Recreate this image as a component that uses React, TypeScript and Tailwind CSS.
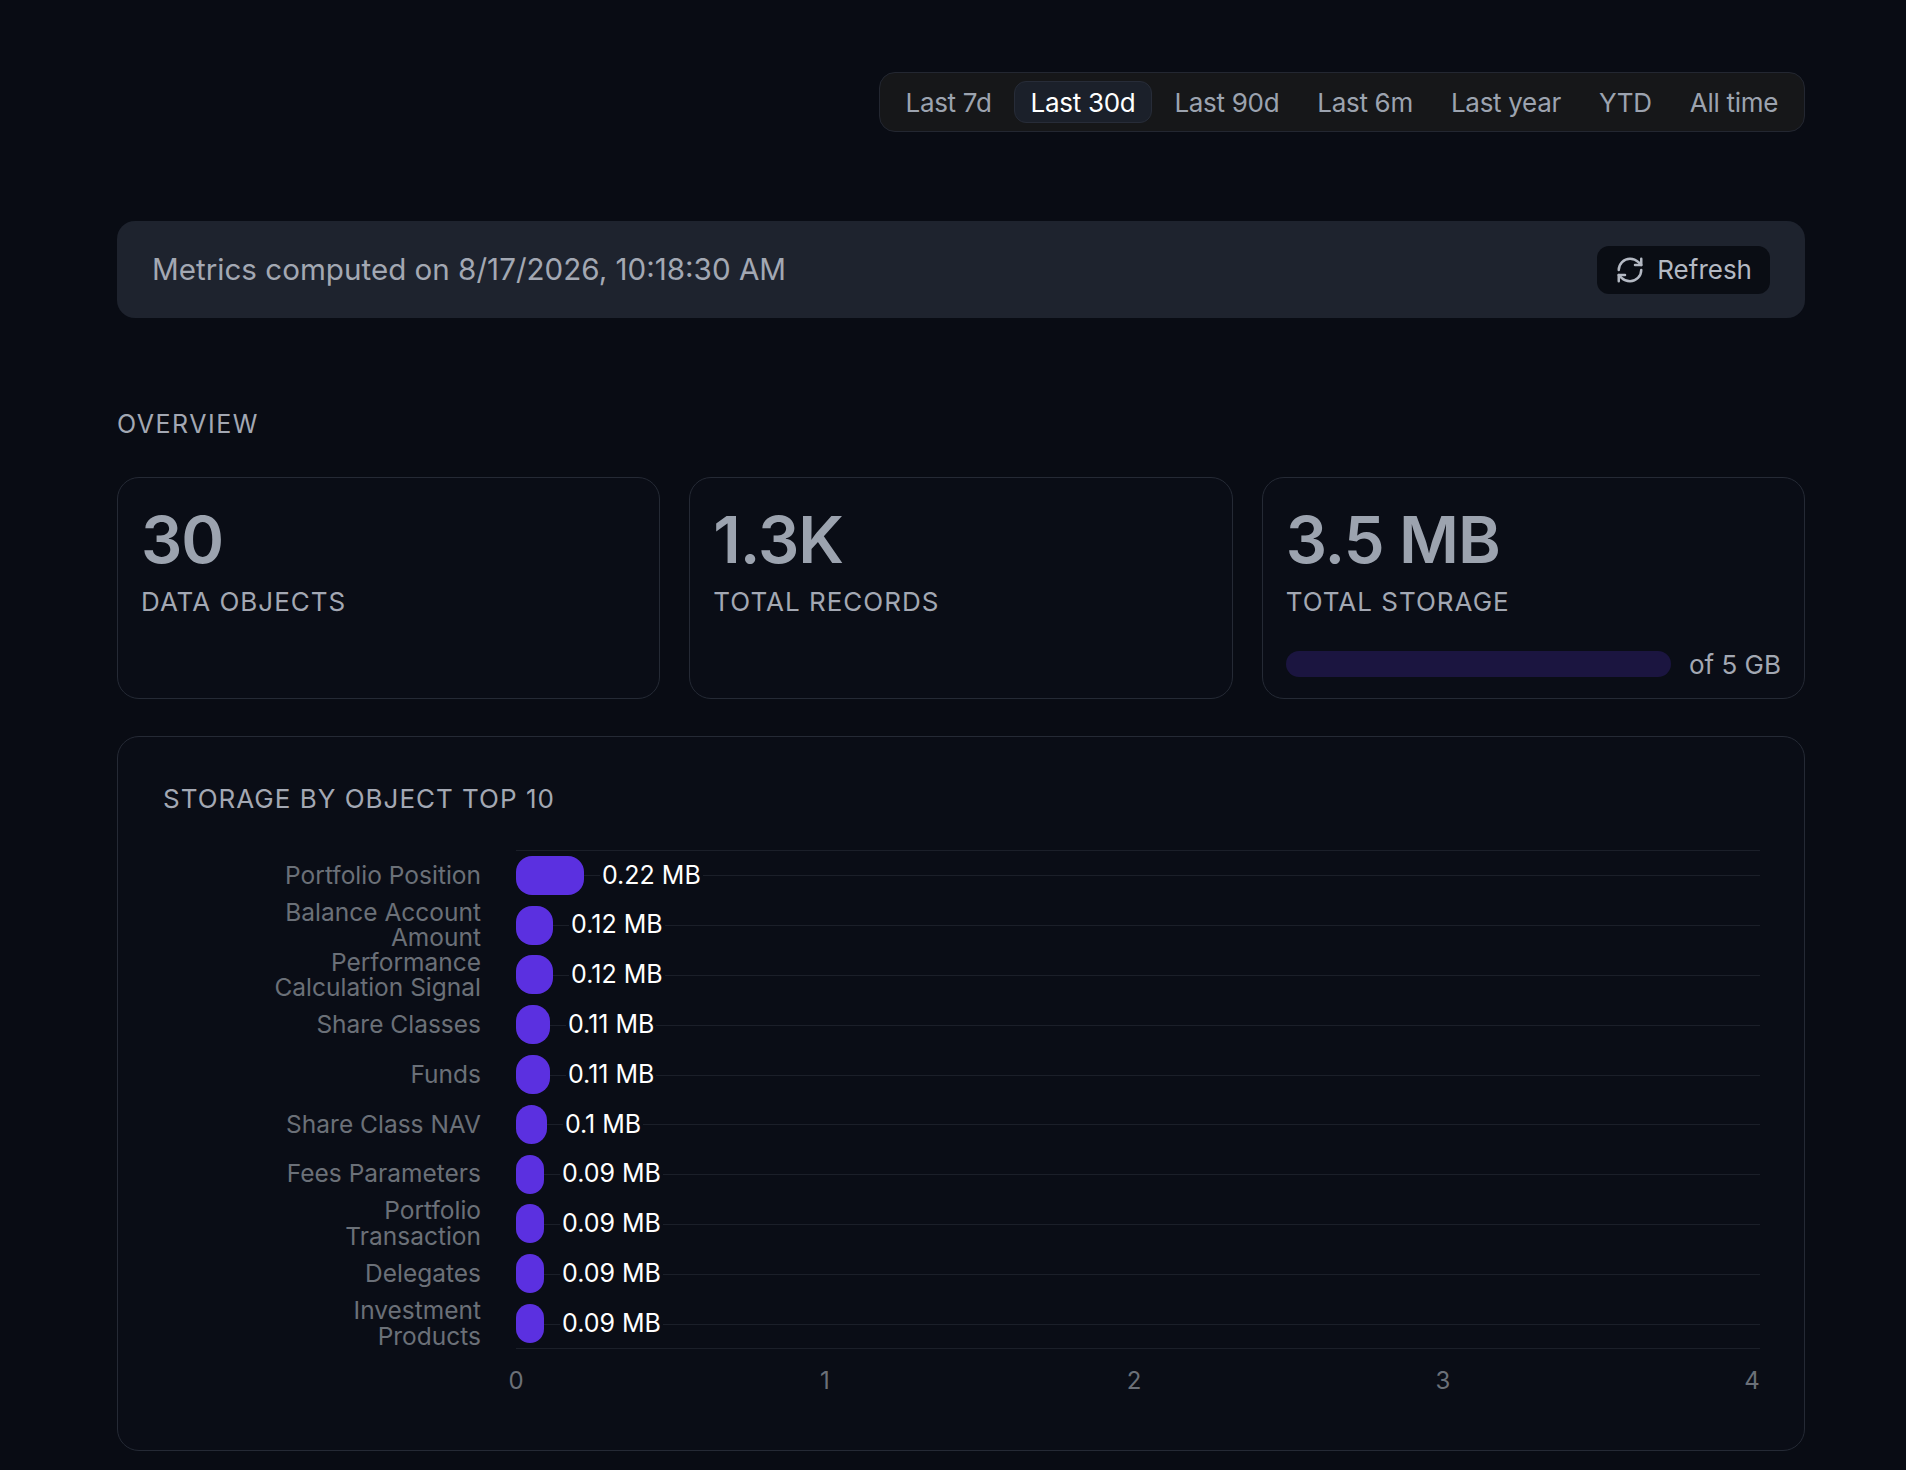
import React from "react";

const tabs = ["Last 7d", "Last 30d", "Last 90d", "Last 6m", "Last year", "YTD", "All time"];
const rows: [string[], number][] = [
  [["Portfolio Position"], 0.22],
  [["Balance Account", "Amount"], 0.12],
  [["Performance", "Calculation Signal"], 0.12],
  [["Share Classes"], 0.11],
  [["Funds"], 0.11],
  [["Share Class NAV"], 0.1],
  [["Fees Parameters"], 0.09],
  [["Portfolio", "Transaction"], 0.09],
  [["Delegates"], 0.09],
  [["Investment", "Products"], 0.09],
];
const PX = 309;

export default function App() {
  return (
    <div className="min-h-[1470px] w-full bg-[#090c14] text-[#9ca3af]" style={{ fontFamily: "Inter, 'Noto Sans', sans-serif" }}>
      <div className="ml-[117px] w-[1688px] pt-[72px] pb-[20px]">
        <div className="flex justify-end">
          <div className="flex items-center gap-[6px] rounded-[16px] border border-[#232731] bg-[#161719] px-[10px] h-[60px]">
            {tabs.map((t) => (
              <div key={t} className={`px-[16px] h-[42px] flex items-center rounded-[12px] text-[26px] tracking-[-0.3px] ${t === "Last 30d" ? "bg-[#1b202a] border border-[#272c38] text-white" : "text-[#9ca3af]"}`}>{t}</div>
            ))}
          </div>
        </div>
        <div className="mt-[89px] h-[97px] rounded-[18px] bg-[#1e232e] flex items-center justify-between px-[35px]">
          <div className="text-[29.6px] text-[#a3a8b3]">Metrics computed on 8/17/2026, 10:18:30 AM</div>
          <div className="flex items-center gap-[12px] h-[48px] px-[18px] rounded-[12px] bg-[#0a0d14] text-[26px] text-[#b4b9c3]">
            <svg width="30" height="30" viewBox="0 0 24 24" fill="none" stroke="currentColor" strokeWidth="2" strokeLinecap="round" strokeLinejoin="round">
              <path d="M3 12a9 9 0 0 1 9-9 9.75 9.75 0 0 1 6.74 2.74L21 8" />
              <path d="M21 3v5h-5" />
              <path d="M21 12a9 9 0 0 1-9 9 9.75 9.75 0 0 1-6.74-2.74L3 16" />
              <path d="M8 16H3v5" />
            </svg>
            Refresh
          </div>
        </div>
        <div className="mt-[88px] text-[25px] tracking-[1.5px] text-[#a3a8b3]">OVERVIEW</div>
        <div className="mt-[33px] grid grid-cols-3 gap-[29px]">
          {[["30", "DATA OBJECTS"], ["1.3K", "TOTAL RECORDS"], ["3.5 MB", "TOTAL STORAGE"]].map(([v, l], i) => (
            <div key={l} className="h-[222px] rounded-[22px] border border-[#252a35] bg-[#0a0d16] px-[23px] pt-[24px]">
              <div className="text-[65px] font-semibold leading-[76px] text-[#9ca3af] tracking-[-1px]">{v}</div>
              <div className="mt-[4px] text-[26px] tracking-[1px] text-[#a3a8b3]">{l}</div>
              {i === 2 && (
                <div className="mt-[24px] flex items-center gap-[18px]">
                  <div className="flex-1 h-[26px] rounded-full bg-[#1b1540]" />
                  <div className="text-[26px] text-[#a3a8b3]">of 5 GB</div>
                </div>
              )}
            </div>
          ))}
        </div>
        <div className="mt-[37px] h-[715px] rounded-[22px] border border-[#252a35] bg-[#0a0d16] pl-[45px] pr-[44px] pt-[42px]">
          <div className="text-[26px] tracking-[1px] text-[#a3a8b3]">STORAGE BY OBJECT TOP 10</div>
          <div className="mt-[32px] flex">
            <div className="w-[353px] pr-[35px] flex flex-col pt-[1px]">
              {rows.map(([lab]) => (
                <div key={lab.join()} className="h-[49.8px] flex flex-col justify-center items-end text-[24.5px] leading-[25.5px] text-[#6b7078] whitespace-nowrap">
                  {lab.map((s) => <div key={s}>{s}</div>)}
                </div>
              ))}
            </div>
            <div className="flex-1 relative">
              <div className="border-t border-[#1b1f29]" />
              {rows.map(([lab, v]) => (
                <div key={lab.join()} className="h-[49.8px] relative flex items-center">
                  <div className="absolute left-0 right-0 top-1/2 border-t border-[#1b1f29]" />
                  <div className="relative h-[39px] rounded-[16px] bg-[#5b30e0]" style={{ width: Math.max(v * PX, 28) }} />
                  <div className="relative ml-[16px] text-[25px] text-white bg-[#0a0d16] px-[2px]">{v} MB</div>
                </div>
              ))}
              <div className="border-t border-[#1b1f29]" />
              <div className="relative h-[60px] mt-[14px] text-[24px] text-[#6b7078]">
                {[0, 1, 2, 3, 4].map((n) => (
                  <div key={n} className="absolute -translate-x-1/2" style={{ left: n * PX }}>{n}</div>
                ))}
              </div>
            </div>
          </div>
        </div>
      </div>
    </div>
  );
}
